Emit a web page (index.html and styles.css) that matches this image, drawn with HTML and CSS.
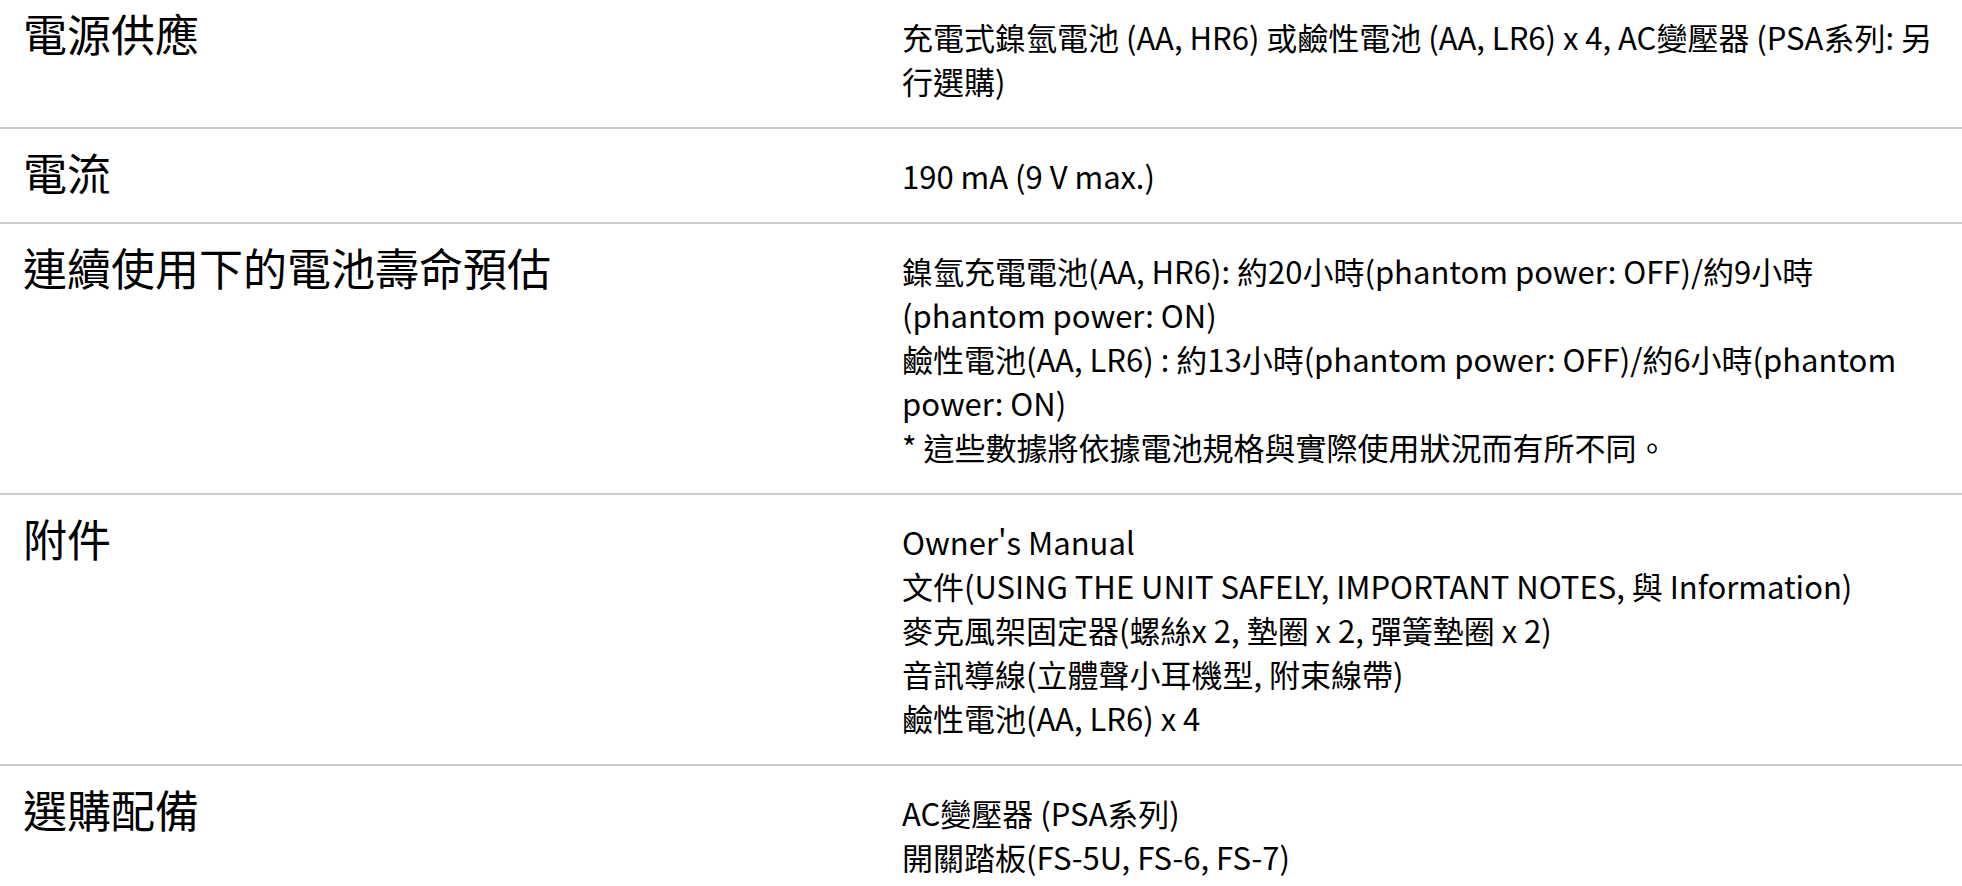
FILE: index.html
```html
<!DOCTYPE html>
<html lang="zh-Hant">
<head>
<meta charset="utf-8">
<title>規格</title>
<link rel="stylesheet" href="styles.css">
</head>
<body>
<div class="specs">
  <div class="spec first">
    <div class="label">電源供應</div>
    <div class="value">充電式鎳氫電池 (AA, HR6) 或鹼性電池 (AA, LR6) x 4, AC變壓器 (PSA系列: 另行選購)</div>
  </div>
  <div class="spec">
    <div class="label">電流</div>
    <div class="value">190 mA (9 V max.)</div>
  </div>
  <div class="spec">
    <div class="label">連續使用下的電池壽命預估</div>
    <div class="value">鎳氫充電電池(AA, HR6): 約20小時(phantom power: OFF)/約9小時<br>(phantom power: ON)<br>鹼性電池(AA, LR6) : 約13小時(phantom power: OFF)/約6小時(phantom power: ON)<br>* 這些數據將依據電池規格與實際使用狀況而有所不同。</div>
  </div>
  <div class="spec">
    <div class="label">附件</div>
    <div class="value">Owner's Manual<br>文件(USING THE UNIT SAFELY, IMPORTANT NOTES, 與 Information)<br>麥克風架固定器(螺絲x 2, 墊圈 x 2, 彈簧墊圈 x 2)<br>音訊導線(立體聲小耳機型, 附束線帶)<br>鹼性電池(AA, LR6) x 4</div>
  </div>
  <div class="spec">
    <div class="label">選購配備</div>
    <div class="value">AC變壓器 (PSA系列)<br>開關踏板(FS-5U, FS-6, FS-7)</div>
  </div>
</div>
</body>
</html>
```
FILE: styles.css
```css
html, body {
  margin: 0;
  padding: 0;
  background: #fff;
}
body {
  color: #000;
  font-family: "Noto Sans CJK TC", "Noto Sans", sans-serif;
}
.specs {
  display: flex;
  flex-direction: column;
}
.spec {
  display: grid;
  grid-template-columns: 879px 1fr;
  padding: 25px 20px 24px 23px;
  border-bottom: 2px solid #cccccc;
}
.spec.first {
  padding-top: 15px;
}
.label {
  font-size: 44px;
  line-height: 32px;
  margin-top: 2px;
}
.value {
  font-size: 31px;
  line-height: 44px;
}
```
